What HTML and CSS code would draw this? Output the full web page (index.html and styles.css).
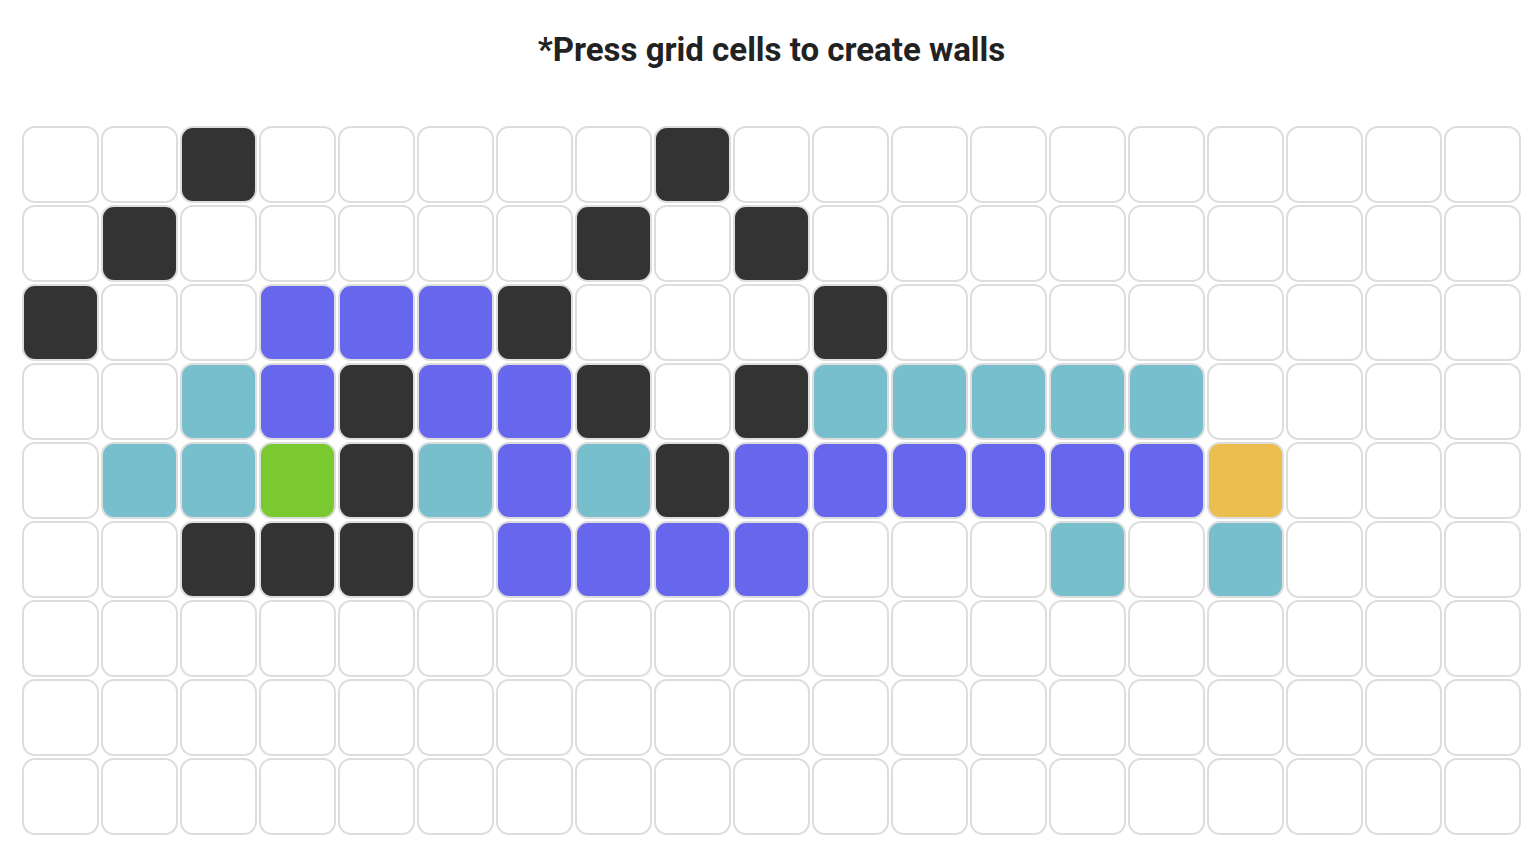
FILE: index.html
```html
<!DOCTYPE html>
<html>
<head>
<meta charset="utf-8">
<link rel="stylesheet" href="styles.css">
</head>
<body>
<div class="page">
  <h1 class="title">*Press grid cells to create walls</h1>
  <div class="grid">
    <!-- row 0 -->
    <div class="cell"></div><div class="cell"></div><div class="cell wall"></div><div class="cell"></div><div class="cell"></div><div class="cell"></div><div class="cell"></div><div class="cell"></div><div class="cell wall"></div><div class="cell"></div><div class="cell"></div><div class="cell"></div><div class="cell"></div><div class="cell"></div><div class="cell"></div><div class="cell"></div><div class="cell"></div><div class="cell"></div><div class="cell"></div>
    <!-- row 1 -->
    <div class="cell"></div><div class="cell wall"></div><div class="cell"></div><div class="cell"></div><div class="cell"></div><div class="cell"></div><div class="cell"></div><div class="cell wall"></div><div class="cell"></div><div class="cell wall"></div><div class="cell"></div><div class="cell"></div><div class="cell"></div><div class="cell"></div><div class="cell"></div><div class="cell"></div><div class="cell"></div><div class="cell"></div><div class="cell"></div>
    <!-- row 2 -->
    <div class="cell wall"></div><div class="cell"></div><div class="cell"></div><div class="cell visited"></div><div class="cell visited"></div><div class="cell visited"></div><div class="cell wall"></div><div class="cell"></div><div class="cell"></div><div class="cell"></div><div class="cell wall"></div><div class="cell"></div><div class="cell"></div><div class="cell"></div><div class="cell"></div><div class="cell"></div><div class="cell"></div><div class="cell"></div><div class="cell"></div>
    <!-- row 3 -->
    <div class="cell"></div><div class="cell"></div><div class="cell frontier"></div><div class="cell visited"></div><div class="cell wall"></div><div class="cell visited"></div><div class="cell visited"></div><div class="cell wall"></div><div class="cell"></div><div class="cell wall"></div><div class="cell frontier"></div><div class="cell frontier"></div><div class="cell frontier"></div><div class="cell frontier"></div><div class="cell frontier"></div><div class="cell"></div><div class="cell"></div><div class="cell"></div><div class="cell"></div>
    <!-- row 4 -->
    <div class="cell"></div><div class="cell frontier"></div><div class="cell frontier"></div><div class="cell start"></div><div class="cell wall"></div><div class="cell frontier"></div><div class="cell visited"></div><div class="cell frontier"></div><div class="cell wall"></div><div class="cell visited"></div><div class="cell visited"></div><div class="cell visited"></div><div class="cell visited"></div><div class="cell visited"></div><div class="cell visited"></div><div class="cell end"></div><div class="cell"></div><div class="cell"></div><div class="cell"></div>
    <!-- row 5 -->
    <div class="cell"></div><div class="cell"></div><div class="cell wall"></div><div class="cell wall"></div><div class="cell wall"></div><div class="cell"></div><div class="cell visited"></div><div class="cell visited"></div><div class="cell visited"></div><div class="cell visited"></div><div class="cell"></div><div class="cell"></div><div class="cell"></div><div class="cell frontier"></div><div class="cell"></div><div class="cell frontier"></div><div class="cell"></div><div class="cell"></div><div class="cell"></div>
    <!-- row 6 -->
    <div class="cell"></div><div class="cell"></div><div class="cell"></div><div class="cell"></div><div class="cell"></div><div class="cell"></div><div class="cell"></div><div class="cell"></div><div class="cell"></div><div class="cell"></div><div class="cell"></div><div class="cell"></div><div class="cell"></div><div class="cell"></div><div class="cell"></div><div class="cell"></div><div class="cell"></div><div class="cell"></div><div class="cell"></div>
    <!-- row 7 -->
    <div class="cell"></div><div class="cell"></div><div class="cell"></div><div class="cell"></div><div class="cell"></div><div class="cell"></div><div class="cell"></div><div class="cell"></div><div class="cell"></div><div class="cell"></div><div class="cell"></div><div class="cell"></div><div class="cell"></div><div class="cell"></div><div class="cell"></div><div class="cell"></div><div class="cell"></div><div class="cell"></div><div class="cell"></div>
    <!-- row 8 -->
    <div class="cell"></div><div class="cell"></div><div class="cell"></div><div class="cell"></div><div class="cell"></div><div class="cell"></div><div class="cell"></div><div class="cell"></div><div class="cell"></div><div class="cell"></div><div class="cell"></div><div class="cell"></div><div class="cell"></div><div class="cell"></div><div class="cell"></div><div class="cell"></div><div class="cell"></div><div class="cell"></div><div class="cell"></div>
  </div>
</div>
</body>
</html>
```

FILE: styles.css
```css
html, body {
  margin: 0;
  padding: 0;
  background: #ffffff;
}

body {
  font-family: Roboto, "Liberation Sans", sans-serif;
  color: #222222;
}

.page {
  padding: 0 0 0 22px;
  width: 1499px;
}

.title {
  margin: 0;
  padding-top: 30px;
  height: 126px;
  box-sizing: border-box;
  font-size: 33px;
  font-weight: 700;
  line-height: 40px;
  text-align: center;
  color: #222222;
}

.grid {
  display: grid;
  grid-template-columns: repeat(19, 77px);
  grid-auto-rows: 77px;
  gap: 2px;
}

.cell {
  box-sizing: border-box;
  border: 2px solid #dddddd;
  border-radius: 13px;
  background: #ffffff;
}

.wall {
  background: #333333;
}

.visited {
  background: #6767ee;
}

.frontier {
  background: #77bfcd;
}

.start {
  background: #7ac930;
}

.end {
  background: #ebbe4f;
}
```
